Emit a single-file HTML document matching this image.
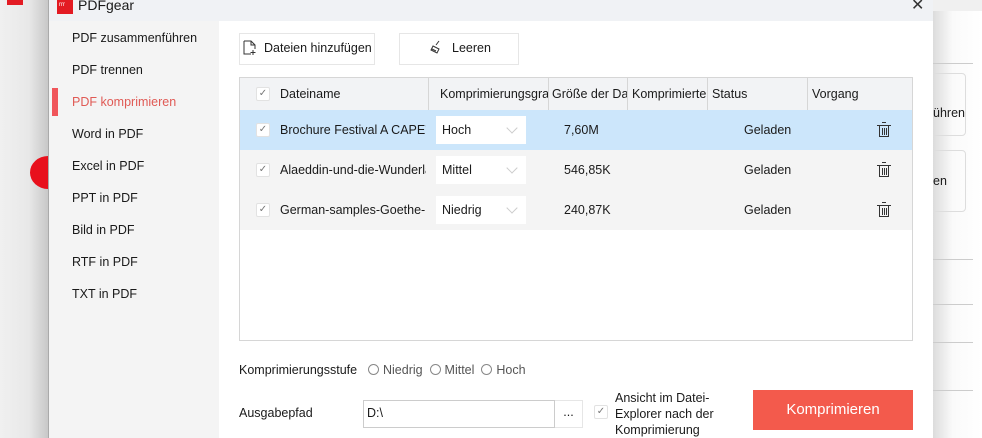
<!DOCTYPE html>
<html><head><meta charset="utf-8"><style>
*{box-sizing:border-box;margin:0;padding:0}
body{width:982px;height:438px;overflow:hidden;background:#f2f2f2;font-family:"Segoe UI","Liberation Sans",sans-serif;font-size:12.5px;color:#1a1a1a;position:relative}
.a{position:absolute}
.side div{position:absolute;left:23px;font-size:12.5px}
.cb{position:absolute;width:14px;height:14px;background:#fff;border:1px solid #e2e2e2;border-radius:2px;font-size:10px;color:#777;text-align:center;line-height:12px}
.sel{position:absolute;left:436px;width:90px;height:28px;background:#fff;padding-left:6px;line-height:28px}
.sel:after{content:"";position:absolute;right:10px;top:8px;width:7px;height:7px;border-right:1px solid #ccc;border-bottom:1px solid #ccc;transform:rotate(45deg)}
.radio{display:inline-block;width:11px;height:11px;border:1px solid #888;border-radius:50%;vertical-align:-1px;margin-right:4px}
</style></head><body>
<div class="a" style="left:933px;top:0;width:49px;height:438px;background:linear-gradient(90deg,#dcdcdc,#fafafa 40%,#fff)"></div>
<div class="a" style="left:933px;top:0;width:49px;height:11px;background:#f0f0f0"></div>
<div class="a" style="left:933px;top:63px;width:40px;height:1px;background:#ccc"></div>
<div class="a" style="left:920px;top:73px;width:46px;height:63px;border:1px solid #ddd;border-radius:4px"></div>
<div class="a" style="left:920px;top:150px;width:46px;height:62px;border:1px solid #ddd;border-radius:4px"></div>
<div class="a" style="left:933px;top:106px">ühren</div>
<div class="a" style="left:933px;top:174px">en</div>
<div class="a" style="left:933px;top:259px;width:40px;height:1px;background:#ccc"></div>
<div class="a" style="left:933px;top:304px;width:40px;height:1px;background:#ccc"></div>
<div class="a" style="left:933px;top:342px;width:40px;height:1px;background:#ccc"></div>
<div class="a" style="left:933px;top:390px;width:40px;height:1px;background:#ccc"></div>
<div class="a" style="left:0;top:0;width:48px;height:438px;background:linear-gradient(90deg,#f0f0f0,#e8e8e8 60%,#c8c8c8)"></div>
<div class="a" style="left:30px;top:156px;width:36px;height:33px;border-radius:50%;background:#e8101c"></div>
<div class="a" style="left:7px;top:0;width:16px;height:5px;background:#e31b23"></div>
<div class="a" style="left:48px;top:0;width:885px;height:438px;background:#fff;border-left:1px solid #aaa"></div>
<div class="a" style="left:49px;top:0;width:884px;height:21px;background:#f0f2f5"></div>
<div class="a" style="left:57px;top:0;width:16px;height:14px;background:#e31b23;color:#fff;font-size:6px;line-height:10px;padding-left:2px">rrr</div>
<div class="a" style="left:78px;top:-3px;font-size:14px">PDFgear</div>
<div class="a" style="left:911px;top:-5px;font-size:16px;color:#333">✕</div>
<div class="a side" style="left:49px;top:21px;width:170px;height:417px;background:#f4f4f4">
<div style="top:10px">PDF zusammenführen</div>
<div style="top:42px">PDF trennen</div>
<div style="top:74px;color:#e05a55">PDF komprimieren</div>
<div style="top:106px">Word in PDF</div>
<div style="top:138px">Excel in PDF</div>
<div style="top:170px">PPT in PDF</div>
<div style="top:202px">Bild in PDF</div>
<div style="top:234px">RTF in PDF</div>
<div style="top:266px">TXT in PDF</div>
</div>
<div class="a" style="left:52px;top:88px;width:6px;height:28px;background:#f0555a"></div>
<div class="a" style="left:239px;top:33px;width:136px;height:32px;border:1px solid #e6e6e6;padding:7px 0 0 24px">Dateien hinzufügen</div>
<svg class="a" style="left:242px;top:40px" width="15" height="16"><path d="M2 1h7l4 4v4M2 1v13h7M9 1v4h4M11 10v5M8.5 12.5h5" fill="none" stroke="#333" stroke-width="1"/></svg>
<div class="a" style="left:399px;top:33px;width:120px;height:32px;border:1px solid #e6e6e6;padding:7px 0 0 52px">Leeren</div>
<svg class="a" style="left:430px;top:40px" width="16" height="14"><path d="M9 1l-3 4M3 6l6 3-2 4-6-3zM2 9l4 2" fill="none" stroke="#333"/></svg>
<div class="a" style="left:239px;top:77px;width:674px;height:264px;border:1px solid #d6d6d6;background:#fff"></div>
<div class="a" style="left:240px;top:78px;width:672px;height:32px;background:#f2f3f5"></div>
<div class="a" style="left:240px;top:110px;width:672px;height:40px;background:#cce6fb"></div>
<div class="a" style="left:240px;top:150px;width:672px;height:80px;background:#f4f4f4"></div>
<div class="a" style="left:428px;top:78px;width:1px;height:32px;background:#d6d6d6"></div>
<div class="a" style="left:548px;top:78px;width:1px;height:32px;background:#d6d6d6"></div>
<div class="a" style="left:627px;top:78px;width:1px;height:32px;background:#d6d6d6"></div>
<div class="a" style="left:707px;top:78px;width:1px;height:32px;background:#d6d6d6"></div>
<div class="a" style="left:807px;top:78px;width:1px;height:32px;background:#d6d6d6"></div>
<div class="cb" style="left:256px;top:87px">✓</div>
<div class="a" style="left:280px;top:87px">Dateiname</div>
<div class="a" style="left:440px;top:87px;width:108px;overflow:hidden;white-space:nowrap">Komprimierungsgrad</div>
<div class="a" style="left:552px;top:87px;width:75px;overflow:hidden;white-space:nowrap">Größe der Datei</div>
<div class="a" style="left:632px;top:87px;width:75px;overflow:hidden;white-space:nowrap">Komprimierte</div>
<div class="a" style="left:712px;top:87px">Status</div>
<div class="a" style="left:812px;top:87px">Vorgang</div>
<div class="cb" style="left:256px;top:123px">✓</div>
<div class="a" style="left:280px;top:123px;width:146px;overflow:hidden;white-space:nowrap">Brochure Festival A CAPE'llano</div>
<div class="sel" style="top:116px">Hoch</div>
<div class="a" style="left:564px;top:123px">7,60M</div>
<div class="a" style="left:744px;top:123px">Geladen</div>
<div class="cb" style="left:256px;top:163px">✓</div>
<div class="a" style="left:280px;top:163px;width:146px;overflow:hidden;white-space:nowrap">Alaeddin-und-die-Wunderlampe</div>
<div class="sel" style="top:156px">Mittel</div>
<div class="a" style="left:564px;top:163px">546,85K</div>
<div class="a" style="left:744px;top:163px">Geladen</div>
<div class="cb" style="left:256px;top:203px">✓</div>
<div class="a" style="left:280px;top:203px;width:146px;overflow:hidden;white-space:nowrap">German-samples-Goethe-Institut</div>
<div class="sel" style="top:196px">Niedrig</div>
<div class="a" style="left:564px;top:203px">240,87K</div>
<div class="a" style="left:744px;top:203px">Geladen</div>
<svg class="a" style="left:876px;top:121px" width="16" height="18"><path d="M6 1.5h4M1 4.5h14M3.5 4.5v11h9v-11M6.5 7v7M8.5 7v7M10.5 7v7" fill="none" stroke="#333" stroke-width="1"/></svg>
<svg class="a" style="left:876px;top:161px" width="16" height="18"><path d="M6 1.5h4M1 4.5h14M3.5 4.5v11h9v-11M6.5 7v7M8.5 7v7M10.5 7v7" fill="none" stroke="#333" stroke-width="1"/></svg>
<svg class="a" style="left:876px;top:201px" width="16" height="18"><path d="M6 1.5h4M1 4.5h14M3.5 4.5v11h9v-11M6.5 7v7M8.5 7v7M10.5 7v7" fill="none" stroke="#333" stroke-width="1"/></svg>
<div class="a" style="left:239px;top:363px">Komprimierungsstufe</div>
<div class="a" style="left:368px;top:363px;color:#555"><span class="radio"></span>Niedrig &nbsp;<span class="radio"></span>Mittel &nbsp;<span class="radio"></span>Hoch</div>
<div class="a" style="left:239px;top:406px">Ausgabepfad</div>
<div class="a" style="left:363px;top:400px;width:192px;height:28px;border:1px solid #ccc;padding:5px 0 0 3px">D:\</div>
<div class="a" style="left:555px;top:400px;width:28px;height:28px;border:1px solid #e6e6e6;border-left:none;text-align:center;padding-top:4px">...</div>
<div class="cb" style="left:594px;top:405px">✓</div>
<div class="a" style="left:615px;top:390px;line-height:16px;width:110px">Ansicht im Datei-Explorer nach der Komprimierung</div>
<div class="a" style="left:753px;top:390px;width:160px;height:40px;background:#f35a4c;color:#fff;font-size:15px;text-align:center;line-height:40px">Komprimieren</div>
</body></html>
